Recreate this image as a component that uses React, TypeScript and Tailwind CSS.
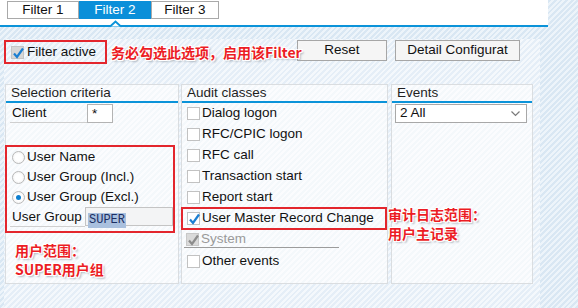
import React from 'react';

type CheckKind = 'off' | 'on' | 'filter' | 'disabled';

function Check({ kind }: { kind: CheckKind }) {
  const box =
    kind === 'filter'
      ? 'bg-[#d6d6d6] border-[#c4c4c4]'
      : kind === 'disabled'
        ? 'bg-[#dadada] border-[#c8c8c8]'
        : 'bg-white border-[#c2c2c2]';
  const stroke = kind === 'disabled' ? '#8c8c8c' : '#1b7fd2';
  return (
    <span className={`relative w-[13px] h-[13px] shrink-0 border ${box}`}>
      {kind !== 'off' && (
        <svg className="absolute left-[0px] top-[0px]" width="13" height="13" viewBox="0 0 13 13" fill="none">
          <path d="M2 6.5L5 10L11 1.5" stroke={stroke} strokeWidth="2.2" />
        </svg>
      )}
    </span>
  );
}

function Radio({ on }: { on?: boolean }) {
  return (
    <span className="w-[13px] h-[13px] shrink-0 rounded-full border border-[#b9b9b9] bg-[radial-gradient(circle,#ffffff_40%,#ececec_100%)] flex items-center justify-center">
      {on && <span className="w-[5px] h-[5px] rounded-full bg-[#0d7fd0]" />}
    </span>
  );
}

function GroupBox({ title, className, children }: { title: string; className: string; children?: React.ReactNode }) {
  return (
    <div className={`h-[200px] border border-[#dadde0] bg-[repeating-linear-gradient(135deg,#f4f8fb_0px,#f4f8fb_2px,#fbfcfe_2px,#fbfcfe_4px)] ${className}`}>
      <div className="h-[18px] border-b-2 border-[#0b93d9] pl-[5px] leading-[16px] text-[#1e1e1e]">{title}</div>
      {children}
    </div>
  );
}

const note = "font-['Noto_Sans_CJK_SC','Liberation_Sans',sans-serif] font-bold text-[14px] leading-[19px] text-[#ec1c24] [text-shadow:1px_1px_0_#fff,-1px_-1px_0_#fff,1px_-1px_0_#fff,-1px_1px_0_#fff,2px_2px_2px_#a9b3bd]";

export default function App() {
  return (
    <div className="w-[578px] h-[308px] overflow-hidden flex flex-col bg-[repeating-linear-gradient(135deg,#d9e7f3_0px,#d9e7f3_2px,#edf4fa_2px,#edf4fa_4px)] text-[13.5px] text-[#111] font-['Liberation_Sans',sans-serif]">
      {/* tab strip */}
      <div className="relative w-[548px] h-[27px] shrink-0 bg-white border-b-2 border-[#0b93d9]">
        <div className="flex pl-[7px] pt-[1px]">
          <div className="w-[72px] h-[18px] border border-[#a9a9a9] flex items-center justify-center leading-none">Filter 1</div>
          <div className="w-[72px] h-[18px] bg-[#0b8fd9] text-white flex items-center justify-center leading-none">Filter 2</div>
          <div className="w-[68px] h-[18px] border border-[#a9a9a9] flex items-center justify-center leading-none">Filter 3</div>
        </div>
        <svg className="absolute left-[110px] top-[20px]" width="11" height="7" viewBox="0 0 11 7" fill="none">
          <path d="M0 6.5L5.5 1.5L11 6.5" fill="#fff" stroke="#0b93d9" strokeWidth="2" />
        </svg>
      </div>

      {/* filter panel */}
      <div className="ml-[4px] mt-[12px] w-[536px] flex-1 bg-[repeating-linear-gradient(135deg,#e5eef7_0px,#e5eef7_2px,#f4f8fc_2px,#f4f8fc_4px)]">
        <div className="relative flex items-start pt-[1px]">
          <div className="w-[103px] h-[24px] border-2 border-[#e3262d] flex items-center pl-[5px] gap-[3px]">
            <Check kind="filter" />
            <span>Filter active</span>
          </div>
          <span className={`absolute left-[107px] top-[4px] z-10 ${note}`}>务必勾选此选项，启用该Filter</span>
          <div className="ml-auto mr-[20px] flex gap-[8px]">
            <div className="w-[90px] h-[21px] border border-[#a6a6a6] bg-[#f5f5f5] flex items-center justify-center">Reset</div>
            <div className="w-[125px] h-[21px] border border-[#a6a6a6] bg-[#f5f5f5] flex items-center justify-center">Detail Configurat</div>
          </div>
        </div>

        <div className="relative flex mt-[20px] pl-[1px]">
          {/* selection criteria */}
          <GroupBox title="Selection criteria" className="w-[174px]">
            <div className="flex mt-[1px] ml-[4px]">
              <div className="w-[77px] h-[19px] border-b border-[#cfcfcf] pl-[2px] leading-[18px]">Client</div>
              <div className="w-[26px] h-[19px] border border-[#b3b3b3] bg-white pl-[4px] leading-[18px]">*</div>
            </div>
            <div className="-ml-[1px] mt-[22px] w-[170px] h-[88px] border-2 border-[#e3262d]">
              <div className="h-[20px] flex items-center gap-[2px] pl-[5px]">
                <Radio />
                <span>User Name</span>
              </div>
              <div className="h-[20px] flex items-center gap-[2px] pl-[5px]">
                <Radio />
                <span>User Group (Incl.)</span>
              </div>
              <div className="h-[20px] flex items-center gap-[2px] pl-[5px]">
                <Radio on />
                <span>User Group (Excl.)</span>
              </div>
              <div className="flex ml-[3px]">
                <div className="w-[77px] h-[20px] border-b border-[#cfcfcf] pl-[2px] leading-[19px]">User Group</div>
                <div className="w-[88px] h-[19px] shrink-0 border border-[#c4c4c4] bg-[#f3f4f5] pl-[2px] pt-[1px]">
                  <span className="bg-[#a9c0de] text-[#1c2f63] font-['Liberation_Mono',monospace] text-[12px] leading-[15px] px-[1px] inline-block">SUPER</span>
                </div>
              </div>
            </div>
            <div className={`ml-[9px] mt-[8px] ${note}`}>
              用户范围：
              <br />
              SUPER用户组
            </div>
          </GroupBox>

          {/* audit classes */}
          <GroupBox title="Audit classes" className="ml-[2px] w-[207px]">
            {['Dialog logon', 'RFC/CPIC logon', 'RFC call', 'Transaction start', 'Report start'].map((t) => (
              <div key={t} className="h-[21px] flex items-center gap-[2px] pl-[5px]">
                <Check kind="off" />
                <span>{t}</span>
              </div>
            ))}
            <div className="-ml-[1px] -mt-[1px] w-[206px] h-[23px] border-2 border-[#e3262d] flex items-center gap-[2px] pl-[4px]">
              <Check kind="on" />
              <span>User Master Record Change</span>
            </div>
            <div className="h-[21px] pt-[2px] pl-[2px]">
              <div className="w-[155px] h-[16px] border-b border-[#9c9c9c] flex items-center gap-[2px] pl-[2px] text-[#9a9a9a]">
                <Check kind="disabled" />
                <span>System</span>
              </div>
            </div>
            <div className="h-[21px] flex items-center gap-[2px] pl-[5px]">
              <Check kind="off" />
              <span>Other events</span>
            </div>
          </GroupBox>

          {/* events */}
          <GroupBox title="Events" className="ml-[3px] w-[142px]">
            <div className="mt-[1px] ml-[3px] w-[132px] h-[19px] border border-[#a8a8a8] bg-white flex items-center justify-between pl-[4px] pr-[6px]">
              <span>2 All</span>
              <svg width="9" height="6" viewBox="0 0 9 6" fill="none">
                <path d="M0.5 0.5L4.5 4.5L8.5 0.5" stroke="#7a7a7a" strokeWidth="1.2" />
              </svg>
            </div>
          </GroupBox>

          <div className={`absolute left-[384px] top-[121px] leading-[18px] ${note}`}>
            审计日志范围：
            <br />
            用户主记录
          </div>
        </div>
      </div>
    </div>
  );
}
